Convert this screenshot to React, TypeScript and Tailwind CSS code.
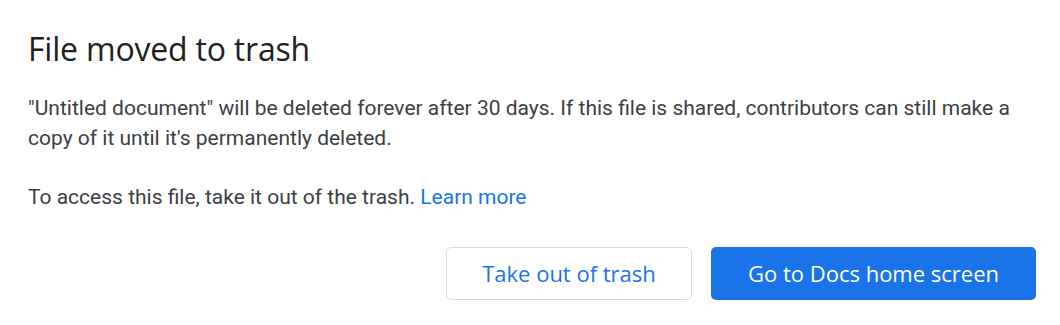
export default function App() {
  return (
    <div className="w-[1060px] h-[325px] bg-white pl-[28px] pr-[24px] pt-[29px] font-['Roboto',sans-serif]">
      <h1 className="text-[32px] leading-[40px] text-[#202124] font-['Open_Sans',sans-serif] tracking-[-0.2px]">
        File moved to trash
      </h1>
      <div className="mt-[25px] text-[21px] leading-[29.5px] text-[#3c4043]">
        <p>
          "Untitled document" will be deleted forever after 30 days. If this file is shared, contributors can still
          make a copy of it until it's permanently deleted.
        </p>
        <p className="mt-[29.5px]">
          To access this file, take it out of the trash.{" "}
          <a href="#" className="text-[#1a73e8]">
            Learn more
          </a>
        </p>
      </div>
      <div className="mt-[35px] flex justify-end gap-[19px] font-['Open_Sans',sans-serif]">
        <button className="w-[246px] h-[53px] rounded-[5px] border border-[#dadce0] bg-white text-[22px] font-medium text-[#1a73e8]">
          Take out of trash
        </button>
        <button className="w-[325px] h-[53px] rounded-[5px] bg-[#1a73e8] text-[22px] font-medium text-white">
          Go to Docs home screen
        </button>
      </div>
    </div>
  )
}
